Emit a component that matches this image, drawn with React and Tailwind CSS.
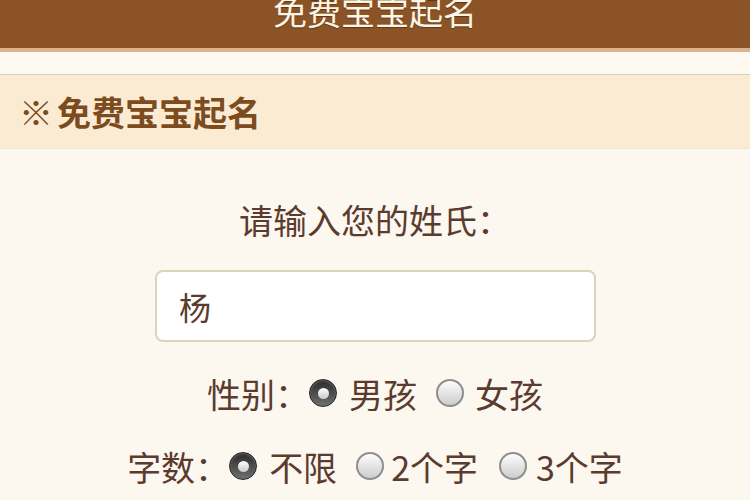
import { useState } from "react";

const FONT = { fontFamily: '"Noto Sans CJK SC", "Noto Sans", sans-serif' };

const Radio = ({ checked, onClick }) =>
    checked ? (
        <span
            onClick={onClick}
            className="flex items-center justify-center w-[28px] h-[28px] rounded-full bg-gradient-to-b from-[#2b2b2b] to-[#707070] border border-[#222] shadow-[inset_0_1px_2px_rgba(255,255,255,0.3)] cursor-pointer shrink-0"
        >
            <span className="block w-[11px] h-[11px] rounded-full bg-gradient-to-b from-[#ffffff] to-[#c9c9c9]" />
        </span>
    ) : (
        <span
            onClick={onClick}
            className="block w-[28px] h-[28px] rounded-full bg-gradient-to-b from-[#fdfdfd] to-[#cdcdcd] border-2 border-[#8e8e8e] cursor-pointer shrink-0"
        />
    );

export default function App() {
    const [surname, setSurname] = useState("杨");
    const [gender, setGender] = useState("boy");
    const [count, setCount] = useState("any");

    return (
        <div style={FONT} className="w-[750px] h-[500px] overflow-hidden bg-[#fcf7ef] text-[#5b3b2e]">
            {/* Top bar */}
            <div className="h-[48px] bg-[#8c5426] overflow-hidden flex justify-center">
                <div className="-mt-[9px] text-[34px] leading-[40px] text-[#fdf5e4] [text-shadow:0_1px_1px_rgba(0,0,0,0.35)]">
                    免费宝宝起名
                </div>
            </div>
            <div className="h-[4px] bg-[#dcb38e]" />
            <div className="h-[23px] bg-[#fdf9f1] border-b border-[#d9d0b9]" />

            {/* Section header */}
            <div className="h-[74px] bg-[#fbebd3] flex items-center pl-[19px] text-[34px] font-bold text-[#7c4b1e] border-b border-[#f3e4cc]">
                <span className="mr-[4px]">※</span>
                <span>免费宝宝起名</span>
            </div>

            {/* Form */}
            <div className="flex flex-col items-center pt-[50px]">
                <div className="h-[40px] flex items-center text-[34px]">请输入您的姓氏：</div>

                <input
                    value={surname}
                    onChange={(e) => setSurname(e.target.value)}
                    style={FONT}
                    className="mt-[31px] w-[441px] h-[72px] ml-[1px] rounded-[8px] bg-white border-2 border-[#dcd3bb] px-[22px] text-[32px] text-[#5b3b2e] outline-none"
                />

                <div className="mt-[31px] h-[40px] flex items-center text-[34px]">
                    <span>性别：</span>
                    <Radio checked={gender === "boy"} onClick={() => setGender("boy")} />
                    <span className="ml-[12px]">男孩</span>
                    <span className="ml-[19px]"><Radio checked={gender === "girl"} onClick={() => setGender("girl")} /></span>
                    <span className="ml-[11px]">女孩</span>
                </div>

                <div className="mt-[33px] h-[40px] flex items-center text-[34px]">
                    <span>字数：</span>
                    <Radio checked={count === "any"} onClick={() => setCount("any")} />
                    <span className="ml-[12px]">不限</span>
                    <span className="ml-[19px]"><Radio checked={count === "2"} onClick={() => setCount("2")} /></span>
                    <span className="ml-[7px]">2个字</span>
                    <span className="ml-[21px]"><Radio checked={count === "3"} onClick={() => setCount("3")} /></span>
                    <span className="ml-[9px]">3个字</span>
                </div>
            </div>
        </div>
    );
}
